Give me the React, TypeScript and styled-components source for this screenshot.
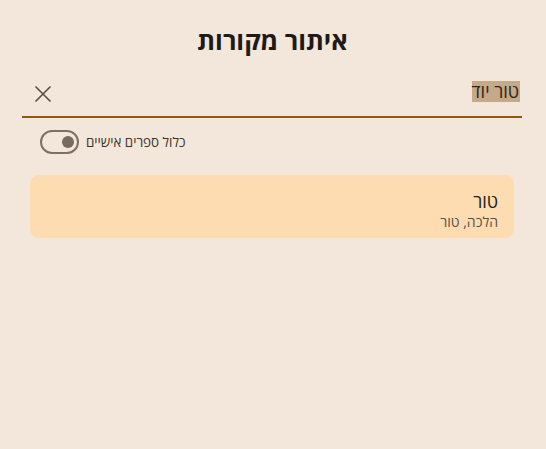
import React from "react";
import styled, { createGlobalStyle } from "styled-components";

const Global = createGlobalStyle`
  html, body { margin: 0; padding: 0; background: #f3e6da; }
  body { font-family: "Open Sans", "DejaVu Sans", sans-serif; }
`;

const Page = styled.div`
  width: 546px;
  height: 449px;
  box-sizing: border-box;
  background: #f3e6da;
  direction: rtl;
  padding: 21px 24px 0 24px;
  display: flex;
  flex-direction: column;
`;

const Title = styled.h1`
  margin: 0;
  text-align: center;
  font-size: 25.5px;
  font-weight: 700;
  color: #1e1a17;
  line-height: 38px;
  padding-right: 1px;
`;

const SearchRow = styled.div`
  margin: 16px 0 0 -2px;
  height: 41px;
  border-bottom: 2px solid #8c5a12;
  display: flex;
  align-items: center;
  justify-content: space-between;
  padding: 0 2px 0 10px;
`;

const Query = styled.span`
  font-size: 18px;
  color: #2e2620;
  background: #c5a988;
  line-height: 21px;
  padding: 0 1px 0 0;
  margin-bottom: 9px;
`;

const ClearButton = styled.button`
  border: none;
  background: transparent;
  padding: 0;
  width: 22px;
  height: 22px;
  display: flex;
  align-items: center;
  justify-content: center;
  margin-bottom: 4px;
  cursor: pointer;
`;

const ToggleRow = styled.label`
  display: flex;
  align-items: center;
  gap: 7px;
  margin-top: 12px;
  align-self: flex-end;
  margin-left: 16px;
  font-size: 13.4px;
  color: #3f352d;
`;

const Track = styled.span`
  width: 39px;
  height: 24px;
  box-sizing: border-box;
  border: 2px solid #7d7064;
  border-radius: 12px;
  position: relative;
  display: inline-block;
`;

const Thumb = styled.span`
  position: absolute;
  width: 12px;
  height: 12px;
  border-radius: 50%;
  background: #786a5d;
  top: 4px;
  left: 20px;
`;

const Card = styled.div`
  margin: 21px 8px 0 6px;
  background: #fedcb1;
  border-radius: 9px;
  height: 63px;
  box-sizing: border-box;
  padding: 15px 16px 0 16px;
  display: flex;
  flex-direction: column;
  align-items: flex-start;
`;

const CardTitle = styled.div`
  font-size: 18px;
  color: #231d18;
  line-height: 22px;
`;

const CardSub = styled.div`
  font-size: 14px;
  color: #5b5047;
  line-height: 19px;
`;

export default function App() {
  return (
    <>
      <Global />
      <Page>
        <Title>איתור מקורות</Title>
        <SearchRow>
          <Query>טור יוד</Query>
          <ClearButton aria-label="clear">
            <svg width="18" height="18" viewBox="0 0 18 18">
              <path d="M1.5 1.5 L16.5 16.5 M16.5 1.5 L1.5 16.5" stroke="#5a4f46" strokeWidth="1.6" fill="none" />
            </svg>
          </ClearButton>
        </SearchRow>
        <ToggleRow>
          <span>כלול ספרים אישיים</span>
          <Track>
            <Thumb />
          </Track>
        </ToggleRow>
        <Card>
          <CardTitle>טור</CardTitle>
          <CardSub>הלכה, טור</CardSub>
        </Card>
      </Page>
    </>
  );
}
